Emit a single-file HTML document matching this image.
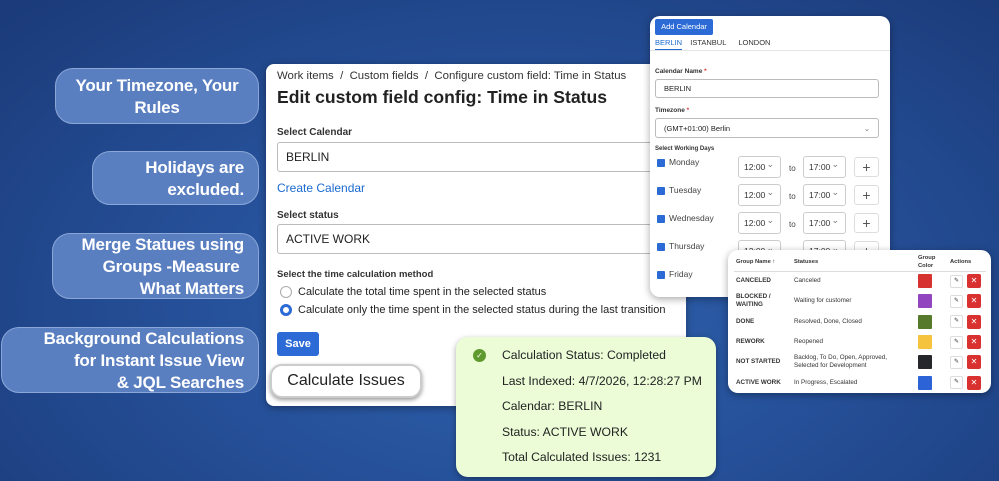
<!DOCTYPE html>
<html><head><meta charset="utf-8"><style>
*{box-sizing:border-box;margin:0;padding:0}
body{width:999px;height:481px;overflow:hidden;position:relative;font-family:"Liberation Sans",sans-serif;background:radial-gradient(ellipse 700px 420px at 520px 300px,#2f62ad 0%,#26519a 45%,#1b3b7a 100%);}
.b{position:absolute;background:#5a7fc1;border:1px solid #8ba7d8;border-radius:18px;color:#fff;font-weight:bold;font-size:17px;line-height:22px;text-align:right;padding:0 14px;white-space:nowrap;letter-spacing:-0.2px}
.p{position:absolute;background:#fff;border-radius:8px;box-shadow:0 2px 8px rgba(0,0,0,.35)}
.lbl{font-size:10px;font-weight:bold;color:#333;position:absolute}
.in{position:absolute;border:1px solid #bbb;border-radius:3px;background:#fff;font-size:11px;color:#222;padding-left:8px;display:flex;align-items:center}
.ck{position:absolute;width:8px;height:8px;background:#2c6bd6;border-radius:1px}
.dn{position:absolute;font-size:8.5px;color:#444}
.sel{position:absolute;border:1px solid #ccc;border-radius:3px;font-size:8.5px;color:#333;padding-left:5px;display:flex;align-items:center;height:22px;width:43px}
.sel:after{content:"⌄";position:absolute;right:6px;top:2px;font-size:9px;color:#777}
.pl{position:absolute;border:1px solid #ddd;border-radius:3px;width:25px;height:20px;text-align:center;font-size:14px;color:#555;line-height:18px}
.to{position:absolute;font-size:8px;color:#444}
table{border-collapse:collapse;position:absolute;left:6px;top:3px;width:252px;table-layout:fixed}
td,th{font-size:6.3px;color:#333;text-align:left;padding:0 2px;line-height:8px;white-space:nowrap;overflow:hidden}
th{font-weight:bold;font-size:5.8px;height:18px;border-bottom:1px solid #ddd}
td{height:20.3px}
td.g{font-weight:bold}
.sw{width:14px;height:14px;border-radius:1px}
.ed{display:inline-block;width:13px;height:13px;border:1px solid #ddd;border-radius:2px;font-size:6px;text-align:center;line-height:11px;vertical-align:middle}
.x{display:inline-block;width:14px;height:14px;background:#d93030;border-radius:2px;color:#fff;font-size:8px;text-align:center;line-height:14px;vertical-align:middle;margin-left:4px}
.gr{position:absolute;left:46px;font-size:12.2px;color:#222}
</style></head><body>
<div class="b" style="left:55px;top:68px;width:204px;height:56px;padding-top:6px;text-align:center">Your Timezone, Your<br>Rules</div>
<div class="b" style="left:92px;top:151px;width:167px;height:54px;padding-top:5px">Holidays are<br>excluded.</div>
<div class="b" style="left:52px;top:233px;width:207px;height:66px;padding-top:0">Merge Statues using<br>Groups -Measure&nbsp;<br>What Matters</div>
<div class="b" style="left:1px;top:327px;width:258px;height:66px;padding-top:0">Background Calculations<br>for Instant Issue View<br>&amp; JQL Searches</div>

<div class="p" style="left:266px;top:64px;width:420px;height:342px">
<div style="position:absolute;left:11px;top:6px;font-size:11.4px;color:#333">Work items &nbsp;/&nbsp; Custom fields &nbsp;/&nbsp; Configure custom field: Time in Status</div>
<div style="position:absolute;left:11px;top:23px;font-size:17.6px;font-weight:bold;color:#222">Edit custom field config: Time in Status</div>
<div class="lbl" style="left:11px;top:63px">Select Calendar</div>
<div class="in" style="left:11px;top:78px;width:420px;height:30px;font-size:12px">BERLIN</div>
<div style="position:absolute;left:11px;top:117px;font-size:12px;color:#1b6ad0">Create Calendar</div>
<div class="lbl" style="left:11px;top:146px">Select status</div>
<div class="in" style="left:11px;top:160px;width:420px;height:30px;font-size:12px">ACTIVE WORK</div>
<div class="lbl" style="left:11px;top:205px;font-size:9.5px">Select the time calculation method</div>
<div style="position:absolute;left:14px;top:222px;width:12px;height:12px;border:1px solid #aaa;border-radius:50%"></div>
<div style="position:absolute;left:32px;top:222px;font-size:11px;color:#222">Calculate the total time spent in the selected status</div>
<div style="position:absolute;left:14px;top:240px;width:12px;height:12px;border:3.5px solid #2c6bd6;border-radius:50%"></div>
<div style="position:absolute;left:32px;top:240px;font-size:11px;color:#222">Calculate only the time spent in the selected status during the last transition</div>
<div style="position:absolute;left:11px;top:268px;width:42px;height:24px;background:#2c6bd6;border-radius:3px;color:#fff;font-size:11px;font-weight:bold;text-align:center;line-height:24px">Save</div>
</div>
<div style="position:absolute;left:270px;top:364px;width:152px;height:34px;background:#fff;border:2px solid #ccc;border-radius:12px;box-shadow:0 2px 4px rgba(0,0,0,.4);font-size:16px;color:#222;text-align:center;line-height:30px">Calculate Issues</div>

<div class="p" style="left:650px;top:16px;width:240px;height:281px;border-radius:10px">
<div style="position:absolute;left:5px;top:3px;width:58px;height:16px;background:#2c6bd6;border-radius:2px;color:#fff;font-size:7.5px;text-align:center;line-height:16px">Add Calendar</div>
<div style="position:absolute;left:5px;top:22px;font-size:7.5px;color:#333;word-spacing:2px"><span style="color:#1b6ad0;border-bottom:1.5px solid #1b6ad0;padding-bottom:2px">BERLIN</span> &nbsp;ISTANBUL &nbsp;&nbsp;LONDON</div>
<div style="position:absolute;left:0;top:34px;width:240px;border-top:1px solid #e5e5e5"></div>
<div class="lbl" style="left:5px;top:52px;font-size:6.5px">Calendar Name <span style="color:#d33">*</span></div>
<div class="in" style="left:5px;top:63px;width:224px;height:19px;font-size:7.5px">BERLIN</div>
<div class="lbl" style="left:5px;top:91px;font-size:6.5px">Timezone <span style="color:#d33">*</span></div>
<div class="in" style="left:5px;top:102px;width:224px;height:20px;font-size:7.5px">(GMT+01:00) Berlin<span style="position:absolute;right:8px;color:#777">⌄</span></div>
<div class="lbl" style="left:5px;top:130px;font-size:6px">Select Working Days</div>
<div class="ck" style="left:7px;top:143px"></div><div class="dn" style="left:19px;top:141px">Monday</div>
<div class="sel" style="left:88px;top:140px">12:00</div><div class="to" style="left:139px;top:148px">to</div><div class="sel" style="left:153px;top:140px">17:00</div><div class="pl" style="left:204px;top:141px">+</div>
<div class="ck" style="left:7px;top:171px"></div><div class="dn" style="left:19px;top:169px">Tuesday</div>
<div class="sel" style="left:88px;top:168px">12:00</div><div class="to" style="left:139px;top:176px">to</div><div class="sel" style="left:153px;top:168px">17:00</div><div class="pl" style="left:204px;top:169px">+</div>
<div class="ck" style="left:7px;top:199px"></div><div class="dn" style="left:19px;top:197px">Wednesday</div>
<div class="sel" style="left:88px;top:196px">12:00</div><div class="to" style="left:139px;top:204px">to</div><div class="sel" style="left:153px;top:196px">17:00</div><div class="pl" style="left:204px;top:197px">+</div>
<div class="ck" style="left:7px;top:227px"></div><div class="dn" style="left:19px;top:225px">Thursday</div>
<div class="sel" style="left:88px;top:224px">12:00</div><div class="sel" style="left:153px;top:224px">17:00</div><div class="pl" style="left:204px;top:225px">+</div>
<div class="ck" style="left:7px;top:255px"></div><div class="dn" style="left:19px;top:253px">Friday</div>
</div>

<div class="p" style="left:728px;top:250px;width:263px;height:143px;border-radius:10px">
<table>
<colgroup><col style="width:58px"><col style="width:124px"><col style="width:32px"><col style="width:38px"></colgroup>
<tr><th>Group Name ↑</th><th>Statuses</th><th>Group<br>Color</th><th>Actions</th></tr>
<tr><td class="g">CANCELED</td><td>Canceled</td><td><div class="sw" style="background:#d6322f"></div></td><td><span class="ed">✎</span><span class="x">✕</span></td></tr>
<tr><td class="g">BLOCKED /<br>WAITING</td><td>Waiting for customer</td><td><div class="sw" style="background:#9146c0"></div></td><td><span class="ed">✎</span><span class="x">✕</span></td></tr>
<tr><td class="g">DONE</td><td>Resolved, Done, Closed</td><td><div class="sw" style="background:#56792b"></div></td><td><span class="ed">✎</span><span class="x">✕</span></td></tr>
<tr><td class="g">REWORK</td><td>Reopened</td><td><div class="sw" style="background:#f5c33d"></div></td><td><span class="ed">✎</span><span class="x">✕</span></td></tr>
<tr><td class="g">NOT STARTED</td><td>Backlog, To Do, Open, Approved,<br>Selected for Development</td><td><div class="sw" style="background:#25272b"></div></td><td><span class="ed">✎</span><span class="x">✕</span></td></tr>
<tr><td class="g">ACTIVE WORK</td><td>In Progress, Escalated</td><td><div class="sw" style="background:#2c63d6"></div></td><td><span class="ed">✎</span><span class="x">✕</span></td></tr>
</table>
</div>

<div style="position:absolute;left:456px;top:337px;width:260px;height:140px;background:#ebfcd7;border-radius:12px;box-shadow:0 2px 6px rgba(0,0,0,.35)">
<div style="position:absolute;left:17px;top:12px;width:13px;height:13px;border-radius:50%;background:#5f9a2f;color:#fff;font-size:8px;text-align:center;line-height:13px">✓</div>
<div class="gr" style="top:11px">Calculation Status: Completed</div>
<div class="gr" style="top:37px">Last Indexed: 4/7/2026, 12:28:27 PM</div>
<div class="gr" style="top:62px">Calendar: BERLIN</div>
<div class="gr" style="top:88px">Status: ACTIVE WORK</div>
<div class="gr" style="top:113px">Total Calculated Issues: 1231</div>
</div>
</body></html>
